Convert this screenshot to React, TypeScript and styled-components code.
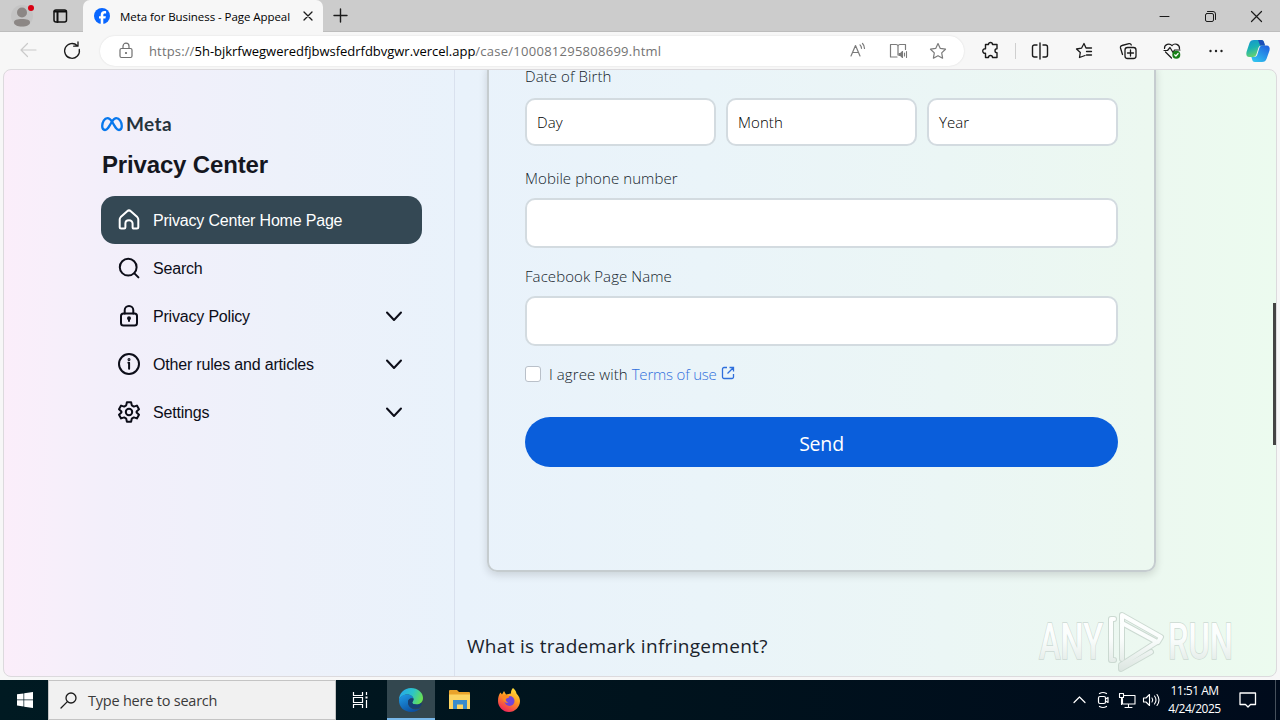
import React from "react";
import styled, { createGlobalStyle } from "styled-components";

const ui = `"Open Sans", "Noto Sans", sans-serif`;
const arial = `"Liberation Sans", Arial, sans-serif`;

const Global = createGlobalStyle`
  * { box-sizing: border-box; }
  body { margin: 0; overflow: hidden; background: #f7f7f7; }
  svg { display: block; flex: none; overflow: visible; }
`;

const Label = styled.span<{ $size: number; $ls?: number; $color?: string; $weight?: number; $family?: string }>`
  font-family: ${(p) => p.$family ?? ui};
  font-size: ${(p) => p.$size}px;
  letter-spacing: ${(p) => p.$ls ?? 0}px;
  color: ${(p) => p.$color ?? "#000"};
  font-weight: ${(p) => p.$weight ?? 400};
  white-space: nowrap;
`;

const Screen = styled.div`
  width: 1280px;
  height: 720px;
  display: flex;
  flex-direction: column;
  overflow: hidden;
`;

/* Browser chrome */
const TabStrip = styled.div`
  height: 32px;
  display: flex;
  background: #ccc;
  box-shadow: inset 0 -1px #bdbdbd;
`;
const StripTools = styled.div`
  width: 83px;
  display: flex;
  align-items: center;
  padding-left: 11px;
  gap: 20px;
`;
const Tab = styled.div`
  width: 240px;
  display: flex;
  align-items: center;
  padding: 0 11px;
  background: #f7f7f7;
  border-radius: 7px 7px 0 0;
`;
const TabTitle = styled.div`
  width: 199px;
  padding-left: 10px;
  display: flex;
`;
const NewTab = styled.div`
  padding: 8px 0 0 10px;
  flex: 1;
`;
const WindowButtons = styled.div`
  display: flex;
  align-items: center;
  gap: 35px;
  padding-right: 18px;
`;
const Toolbar = styled.div`
  height: 37px;
  display: flex;
  align-items: center;
  background: #f7f7f7;
`;
const NavButtons = styled.div`
  width: 100px;
  display: flex;
  padding-left: 19px;
  gap: 25px;
`;
const Address = styled.div`
  width: 864px;
  height: 30px;
  border-radius: 15px;
  background: #fff;
  box-shadow: 0 0 2px rgba(0, 0, 0, 0.12);
  display: flex;
  align-items: center;
  padding: 0 16px 0 17px;
`;
const Url = styled.div`
  flex: 1;
  display: flex;
  padding-left: 14px;
`;
const AddressTools = styled.div`
  display: flex;
  gap: 20px;
`;
const ToolbarIcons = styled.div`
  flex: 1;
  display: flex;
  align-items: center;
  padding-left: 17px;
  gap: 24px;
`;
const Divider = styled.i`
  width: 1px;
  height: 16px;
  margin: 0 -10px;
  background: #cfcfcf;
`;
const Copilot = styled.div`
  margin-left: -4px;
`;

/* Web page */
const Viewport = styled.div`
  height: 608px;
  margin: 0 3px 3px;
  border: 1px solid #dcdadd;
  border-radius: 8px;
  overflow: hidden;
  display: flex;
  position: relative;
  background: linear-gradient(90deg, #fbeefa 0%, #f7effa 4%, #f3effa 8%, #edf1fa 22%, #e9f2fb 36%, #eaf4f9 55%, #ebf6f5 74%, #ecf8f0 90%, #ecfbef 100%);
`;
const ScrollThumb = styled.i`
  position: absolute;
  right: -1px;
  top: 233px;
  width: 4px;
  height: 142px;
  background: #444;
`;
const Sidebar = styled.aside`
  width: 451px;
  padding: 45px 32px 0 97px;
  border-right: 1px solid #d9e1ee;
`;
const Brand = styled.div`
  display: flex;
  align-items: center;
  height: 17px;
  gap: 3px;
`;
const SideTitle = styled.h1`
  margin: 17px 0 15px;
  padding-left: 1px;
  font: 700 24px/32px ${arial};
  letter-spacing: -0.16px;
  color: #15171f;
`;
const NavRow = styled.div<{ $active?: boolean }>`
  width: 321px;
  height: 48px;
  display: flex;
  align-items: center;
  gap: 12px;
  padding: 0 16px;
  border-radius: 14px;
  color: ${(p) => (p.$active ? "#fff" : "#0c0d18")};
  background: ${(p) => (p.$active ? "#344854" : "transparent")};
`;
const NavText = styled.span`
  flex: 1;
  padding-top: 1px;
  font: 400 16px/24px ${arial};
  letter-spacing: -0.19px;
`;
const Main = styled.main`
  width: 702px;
  padding-left: 12px;
`;
const Card = styled.section`
  width: 669px;
  height: 511px;
  margin: -9px 0 0 20px;
  padding: 0 36px;
  border: 2px solid #c5cccf;
  border-radius: 10px;
  box-shadow: 0 3px 9px rgba(0, 0, 0, 0.14);
`;
const FieldLabel = styled.div<{ $top: number }>`
  padding-top: ${(p) => p.$top}px;
  font: 350 15px/22px ${ui};
  letter-spacing: 0.08px;
  color: #131c2b;
`;
const DateRow = styled.div`
  display: flex;
  gap: 10px;
`;
const Box = styled.div<{ $h: number; $top: number }>`
  flex: 1;
  height: ${(p) => p.$h}px;
  margin-top: ${(p) => p.$top}px;
  padding: 0 10px;
  display: flex;
  align-items: center;
  border: 2px solid #d3dbe0;
  border-radius: 10px;
  background: #fff;
`;
const Agree = styled.div`
  height: 24px;
  margin-top: 16px;
  display: flex;
  align-items: center;
`;
const Check = styled.i`
  width: 16px;
  height: 16px;
  margin-right: 8px;
  border: 1px solid #b9c0c9;
  border-radius: 3px;
  background: #fff;
`;
const LinkIcon = styled.div`
  padding: 0 0 3px 4px;
`;
const SendButton = styled.div`
  height: 50px;
  margin-top: 31px;
  padding-top: 3px;
  border-radius: 25px;
  background: #0a5edb;
  display: flex;
  align-items: center;
  justify-content: center;
`;
const Question = styled.h2`
  margin: 59px 0 0;
  font: 500 19px/30px ${ui};
  letter-spacing: 0.3px;
  color: #1a232c;
  white-space: nowrap;
`;
const Watermark = styled.div`
  position: absolute;
  left: 1034px;
  top: 540px;
  width: 200px;
  height: 64px;
`;

/* Taskbar */
const Taskbar = styled.div`
  height: 40px;
  display: flex;
  background: linear-gradient(90deg, #001a22, #00131d 50%, #000b1c);
`;
const TaskButton = styled.div<{ $active?: boolean; $wide?: boolean }>`
  flex: none;
  width: ${(p) => (p.$active ? 48 : p.$wide ? 51 : 49)}px;
  padding-right: ${(p) => (p.$wide ? 3 : 0)}px;
  display: flex;
  align-items: center;
  justify-content: center;
  background: ${(p) => (p.$active ? "#33474f" : "transparent")};
  box-shadow: ${(p) => (p.$active ? "inset 0 -2px #78b8ea" : "none")};
`;
const TaskSearch = styled.div`
  width: 288px;
  margin-left: -1px;
  display: flex;
  align-items: center;
  gap: 11px;
  padding-left: 12px;
  background: #f1f1f1;
  border: 1px solid #c4c4c4;
`;
const Tray = styled.div`
  margin-left: auto;
  display: flex;
  align-items: center;
`;
const TrayIcons = styled.div`
  display: flex;
  align-items: center;
  gap: 8px;
`;
const Clock = styled.div`
  width: 71px;
  display: flex;
  flex-direction: column;
  align-items: center;
  line-height: 18px;
`;
const ShowDesktop = styled.i`
  width: 5px;
  height: 40px;
  margin-left: 11px;
  border-left: 1px solid #46505c;
`;

const Ico = ({ w = 20, h = w, sw = 1.2, c = "#1b1b1b", children }: any) => (
  <svg width={w} height={h} viewBox={`0 0 ${w} ${h}`} fill="none" stroke={c} strokeWidth={sw} strokeLinecap="round" strokeLinejoin="round">
    {children}
  </svg>
);

const Chevron = () => (
  <Ico w={24} sw={2} c="#0c0d18"><path d="M5 8.500l7 7.500 7-7.500" /></Ico>
);

const navItems = [
  { text: "Privacy Center Home Page", active: true, icon: <path d="M4.200 20.500c-1 0-1.500-.6-1.500-1.500v-7.600c0-1 .3-1.600 1-2.300l6.500-5.900c1.100-1 2.500-1 3.600 0l6.500 5.900c.7.700 1 1.300 1 2.300V19c0 .9-.5 1.500-1.500 1.500h-3c-.8 0-1.200-.4-1.200-1.200v-3.700c0-2-1.400-3.300-3.600-3.300s-3.600 1.300-3.600 3.300v3.700c0 .8-.4 1.200-1.200 1.200z" /> },
  { text: "Search", icon: <><circle cx="11.200" cy="11.200" r="8.400" /><path d="M17.400 17.400l4 4" /></> },
  { text: "Privacy Policy", chevron: true, icon: <><rect x="4" y="9.500" width="16" height="12" rx="2.500" /><path d="M7.700 9.500V6.300a4.300 4.300 0 018.600 0v3.200" /><circle cx="12" cy="14.300" r="1" fill="currentColor" /><path d="M12 14.500v2.500" /></> },
  { text: "Other rules and articles", chevron: true, icon: <><circle cx="12" cy="12" r="10" /><path d="M11.400 10.700h.7v6" /><circle cx="12" cy="7.600" r=".5" fill="currentColor" /></> },
  { text: "Settings", chevron: true, icon: <><path d="M9.900 2.300h4.200l.7 3.100 2 1.200 3.100-1 2.100 3.700-2.400 2.100v1.200l2.400 2.100-2.100 3.700-3.100-1-2 1.200-.7 3.100H9.900l-.7-3.100-2-1.200-3.100 1L2 14.700l2.400-2.100v-1.200L2 9.300l2.100-3.700 3.100 1 2-1.200z" /><circle cx="12" cy="12" r="3.200" /></> },
];

export default function App() {
  return (
    <Screen>
      <Global />
      <TabStrip>
        <StripTools>
          <svg width="22" height="22" viewBox="0 0 22 22">
            <circle cx="11" cy="11" r="11" fill="#c4c4c4" />
            <circle cx="11" cy="7.500" r="5" fill="#8c8785" />
            <path d="M3 17.500c0-2.600 3-3.500 8-3.500s8 .9 8 3.500c0 2.500-3.600 4-8 4s-8-1.500-8-4z" fill="#8c8785" />
            <circle cx="20" cy="3" r="3" fill="#d90012" />
          </svg>
          <Ico w={14} sw={1.500} c="#111"><rect x="1" y="1" width="12.500" height="12" rx="2" /><path d="M1.500 2.500h11.500M4.500 3v10" strokeWidth="2" /></Ico>
        </StripTools>
        <Tab>
          <svg width="16" height="16" viewBox="0 0 16 16">
            <circle cx="8" cy="8" r="8" fill="#0866ff" />
            <path d="M6.700 15.900v-5.300H5V8.200h1.700V7.100c0-2.800 1.300-4 4-4 .5 0 1 .1 1.400.2v2.200h-1.200c-1.200 0-1.600.5-1.600 1.600v1.100h2.600l-.5 2.400H9.300v5.300z" fill="#fff" />
          </svg>
          <TabTitle><Label $size={11.5} $ls={-0.06}>Meta for Business - Page Appeal</Label></TabTitle>
          <Ico w={8} sw={1.300}><path d="M0 0l8 8M8 0l-8 8" /></Ico>
        </Tab>
        <NewTab><Ico w={14} sw={1.400}><path d="M7.500 1v13M1 7.500h13" /></Ico></NewTab>
        <WindowButtons>
          <Ico w={10} sw={1}><path d="M0 5.500h9" /></Ico>
          <Ico w={11} sw={1}><rect x=".5" y="2.500" width="8" height="8" rx="1.500" /><path d="M2.500 .5h5.500a2.500 2.500 0 012.500 2.500v5.500" /></Ico>
          <Ico w={11} sw={1.200}><path d="M.5 .5l10 10M10.500 .5l-10 10" /></Ico>
        </WindowButtons>
      </TabStrip>
      <Toolbar>
        <NavButtons>
          <Ico w={18} c="#cacaca"><path d="M2 9h15M8.500 2.500L2 9l6.500 6.500" /></Ico>
          <Ico w={20} sw={1.300}><path d="M15.300 4.700A7.400 7.400 0 1017.300 8.500M16 1v4.200h-4.300" /></Ico>
        </NavButtons>
        <Address>
          <Ico w={18} c="#707070"><rect x="3" y="6.500" width="12" height="9" rx="1.500" /><path d="M6 6.500V4.200a3 3 0 016 0v2.300" /><circle cx="9" cy="11" r=".5" fill="#707070" /></Ico>
          <Url>
            <Label $size={13} $color="#737373" $ls={0.15}>https://</Label>
            <Label $size={13} $ls={-0.02}>5h-bjkrfwegweredfjbwsfedrfdbvgwr.vercel.app</Label>
            <Label $size={13} $color="#737373" $ls={0.26}>/case/100081295808699.html</Label>
          </Url>
          <AddressTools>
            <Ico w={20} c="#7b7b7b"><path d="M3 15L7.500 4.500 12 15M4.500 11.500h6M12 3.800c1 1 1.500 2 1.500 3.500M14.500 2.500c1.500 1.500 2 3 2 5" /></Ico>
            <Ico w={20} c="#7b7b7b"><path d="M9 16H2.500V3.500H8a2 2 0 012 2V14M10 5.500a2 2 0 012-2h5.500v5" /><path d="M11 12.500h1.500l2-2v6l-2-2H11zM16.500 12v3M18.500 10.500v6" strokeWidth="1.100" fill="#7b7b7b" /></Ico>
            <Ico w={20} c="#7b7b7b"><path d="M10 2.500l2.300 4.900 5.200.8-3.800 3.700.9 5.300-4.600-2.500-4.600 2.500.9-5.300-3.800-3.700 5.200-.8z" /></Ico>
          </AddressTools>
        </Address>
        <ToolbarIcons>
          <Ico w={20} sw={1.400}><path d="M4.500 3.500h3a2 2 0 114 0h4.500v4.300a2 2 0 100 4v4.700h-4.500a2 2 0 10-4 0h-3v-4.200a2.300 2.300 0 110-4.500z" /></Ico>
          <Divider />
          <Ico w={20} sw={1.400}><path d="M7 4H4.500a2 2 0 00-2 2v8a2 2 0 002 2H7M13 4h2.500a2 2 0 012 2v8a2 2 0 01-2 2H13M10 2v16" /></Ico>
          <Ico w={20} sw={1.300}><path d="M11 14.500l-5.500 2 .8-5L2.500 8l5-.8L10 2.500l2 4.500h5.500M12.500 10.500h5M12.500 14h5" /></Ico>
          <Ico w={20} sw={1.300}><rect x="7" y="6.500" width="11" height="11" rx="2.500" /><path d="M12.500 9v6M9.500 12h6M4.500 13.500l-2-6.500a2 2 0 011.500-2.500l7-1.800a2 2 0 012.300 1.300" /></Ico>
          <Ico w={20} sw={1.200}><path d="M9.500 17L3.500 11M2.500 7.500A4.200 4.200 0 0110 4.700a4.200 4.200 0 017.500 3M2 9.500h3.500L8 6.500l3 5 1.500-2.500h5.500" /><circle cx="14.300" cy="13.700" r="4" fill="#188018" stroke="none" /><path d="M12.600 13.800l1.300 1.200 2.200-2.500" stroke="#fff" /></Ico>
          <Ico w={20} c="none"><g fill="#222"><circle cx="4.500" cy="10" r="1.200" /><circle cx="10" cy="10" r="1.200" /><circle cx="15.500" cy="10" r="1.200" /></g></Ico>
          <Copilot>
            <svg width="24" height="24" viewBox="0 0 24 24">
              <defs>
                <linearGradient id="ca" x1="0" y1="0" x2=".4" y2="1"><stop stopColor="#1591d2" /><stop offset=".5" stopColor="#19b2b4" /><stop offset="1" stopColor="#6bd36b" /></linearGradient>
                <linearGradient id="cb" x1="1" y1="0" x2=".3" y2="1"><stop stopColor="#1f5be0" /><stop offset="1" stopColor="#2fc0ee" /></linearGradient>
              </defs>
              <path d="M8 1h7c2 0 2.400 1 3 3l.8 2.500h-3c-2 0-3 1-3.600 3l-1.700 5.500c-.6 2-1.500 3-3.500 3H3.500C.8 18-.2 16 .5 13L3.300 4.500C4 2 5.500 1 8 1z" fill="url(#ca)" />
              <path d="M16 23H9c-2 0-2.500-1-3-3l-.6-2H8c2 0 3-1 3.500-3l1.700-5.500c.6-2 1.500-3 3.500-3h3.800c2.700 0 3.700 2 3 5l-2.800 8c-.8 2.500-2.200 3.500-4.700 3.500z" fill="url(#cb)" />
              <path d="M12 1h3.300c2 0 2.400 1 3 3l.8 2.600h-5z" fill="#1c4fb8" />
            </svg>
          </Copilot>
        </ToolbarIcons>
      </Toolbar>

      <Viewport>
        <Sidebar>
          <Brand>
            <svg width="22" height="16" viewBox="0 0 22 16" fill="none" stroke="#0878ed" strokeWidth="2.300">
              <path d="M11 5.500C9.500 3.300 8.200 2.200 6.500 2.200 3.500 2.200 1.200 6 1.200 10c0 2.600 1 4 2.800 4 2.200 0 3.600-2.300 7-8.500 1.500-2.300 2.700-3.300 4.300-3.300 3.100 0 5.500 3.800 5.500 7.800 0 2.600-1 4-2.800 4-2.200 0-3.700-2.500-7-8.500z" />
            </svg>
            <Label $size={19} $weight={700} $family={`Lato, sans-serif`} $color="#26333d" $ls={0.4}>Meta</Label>
          </Brand>
          <SideTitle>Privacy Center</SideTitle>
          {navItems.map((n) => (
            <NavRow key={n.text} $active={n.active}>
              <Ico w={24} sw={2} c="currentColor">{n.icon}</Ico>
              <NavText>{n.text}</NavText>
              {n.chevron && <Chevron />}
            </NavRow>
          ))}
        </Sidebar>
        <Main>
          <Card>
            <FieldLabel $top={2}>Date of Birth</FieldLabel>
            <DateRow>
              {["Day", "Month", "Year"].map((t) => (
                <Box key={t} $h={48} $top={11}><Label $size={15} $weight={350} $ls={0.08}>{t}</Label></Box>
              ))}
            </DateRow>
            <FieldLabel $top={21}>Mobile phone number</FieldLabel>
            <Box $h={50} $top={9} />
            <FieldLabel $top={17}>Facebook Page Name</FieldLabel>
            <Box $h={50} $top={9} />
            <Agree>
              <Check />
              <Label $size={15} $weight={350} $color="#131c2b" $ls={0.08}>I agree with&nbsp;</Label>
              <Label $size={15} $color="#2f6fdc" $weight={350} $ls={-0.2}>Terms of use</Label>
              <LinkIcon>
                <svg width="14" height="14" viewBox="0 0 14 14" fill="none" stroke="#2f6fdc" strokeWidth="1.300">
                  <path d="M6 1.500H3A1.500 1.500 0 001.500 3v8A1.500 1.500 0 003 12.500h8a1.500 1.500 0 001.500-1.500V8M8.500 1.500h4v4M12.500 1.500L6.500 7.500" />
                </svg>
              </LinkIcon>
            </Agree>
            <SendButton><Label $size={19.5} $color="#fff" $ls={-0.2}>Send</Label></SendButton>
          </Card>
          <Question>What is trademark infringement?</Question>
        </Main>
        <Watermark>
          <svg width="200" height="64" viewBox="0 0 200 64" fill="none">
            <defs>
              <linearGradient id="wm" gradientUnits="userSpaceOnUse" x1="0" y1="0" x2="0" y2="64"><stop stopColor="#fff" /><stop offset=".45" stopColor="#fafdfc" /><stop offset="1" stopColor="#d9e3de" /></linearGradient>
            </defs>
            <g fontFamily="Roboto, sans-serif" fontSize="50" fontWeight="500" fill="url(#wm)" stroke="#bccac4" strokeOpacity=".7" strokeWidth="1.600" paintOrder="stroke">
              <text x="1" y="49" textLength="64" lengthAdjust="spacingAndGlyphs">ANY</text>
              <text x="130" y="49" textLength="65" lengthAdjust="spacingAndGlyphs">RUN</text>
            </g>
            <g strokeLinejoin="round" strokeLinecap="round">
              <path d="M76 9h-3v41h3M84 49V5l39 22-3 5M84 13l35 19-36 23v4l30-17" stroke="#b5c4bd" strokeOpacity=".6" strokeWidth="6" />
              <path d="M76 9h-3v41h3M84 49V5l39 22-3 5M84 13l35 19-36 23v4l30-17" stroke="url(#wm)" strokeWidth="4" />
            </g>
          </svg>
        </Watermark>
        <ScrollThumb />
      </Viewport>

      <Taskbar>
        <TaskButton>
          <svg width="16" height="16" viewBox="0 0 16 16" fill="#fff"><path d="M0 2.300l6.500-.9v6.200H0zM7.200 1.300L16 0v7.600H7.200zM0 8.300h6.500v6.200L0 13.600zM7.200 8.300H16V16l-8.800-1.300z" /></svg>
        </TaskButton>
        <TaskSearch>
          <Ico w={16} sw={1.300}><circle cx="10" cy="6" r="5" /><path d="M6.400 9.600L0 16" /></Ico>
          <Label $size={14.5} $color="#3a3a3a" $ls={-0.22}>Type here to search</Label>
        </TaskSearch>
        <TaskButton $wide>
          <svg width="17" height="16" viewBox="0 0 17 16" fill="none" stroke="#fff" strokeWidth="1.200"><path d="M1.500 0v3.500h9V0M1.500 16v-3.500h9V16M1.500 5.500h9v5h-9zM14.500 0v3M14.500 8v8" /><rect x="13.500" y="4.500" width="2" height="2" fill="#fff" stroke="none" /></svg>
        </TaskButton>
        <TaskButton $active>
          <svg width="24" height="24" viewBox="0 0 24 24">
            <defs>
              <linearGradient id="e1" x1="0" y1=".2" x2="1" y2=".5"><stop stopColor="#25a7ed" /><stop offset=".55" stopColor="#2cc4c8" /><stop offset="1" stopColor="#68e052" /></linearGradient>
              <linearGradient id="e2" x1="0" y1="0" x2=".6" y2="1"><stop stopColor="#1f9de8" /><stop offset="1" stopColor="#0c4fa0" /></linearGradient>
            </defs>
            <path d="M0 12C0 5 5.300 0 12 0s12 4.500 12 10c0 4-3 6.500-6.500 6.500-3 0-4.300-1-4.300-2 0-.7 1.300-1.300 1.300-3.300C14.500 9 12 6.500 8.500 6.500 4 6.500 1 9 0 12z" fill="url(#e1)" />
            <path d="M0 12c1-3.500 4-5.500 8.500-5.500 3.200 0 5.700 2 6 4.300-1.200-1-5.500-.8-5.500 3.700 0 4.500 4.500 7.500 9 6.800 1.500-.2 2.800-.8 4-1.500C20 22.500 16.500 24 12.500 24 5 24-.3 19 0 12z" fill="url(#e2)" />
            <path d="M9 14.500c-.2-2.500 1.500-4.500 5.500-3.700.1 1.900-1.300 3-1.300 3.700 0 1 1.500 2 4.300 2 1.800 0 3.300-.5 4.500-1.500.6 0 1 .5.700 1.200-.5 1.300-1.500 2.500-2 3-6 3.500-11.300 0-11.700-4.700z" fill="#163f75" />
          </svg>
        </TaskButton>
        <TaskButton>
          <svg width="22" height="20" viewBox="0 0 22 20">
            <path d="M1 0h7l2 2h10a1 1 0 011 1v15H0V1a1 1 0 011-1z" fill="#e9a32b" />
            <path d="M0 4.500h21V19H0z" fill="#fcd462" />
            <path d="M4 10h14v9h-4v-4.500H8V19H4z" fill="#3a8ccb" />
          </svg>
        </TaskButton>
        <TaskButton>
          <svg width="22" height="24" viewBox="0 0 22 24">
            <defs><linearGradient id="ff" x1=".8" y1="0" x2=".3" y2="1"><stop stopColor="#ffe83f" /><stop offset=".45" stopColor="#ff9a20" /><stop offset="1" stopColor="#f0215c" /></linearGradient></defs>
            <path d="M15 0c2 2 3 3 3.500 5.500C21 8 22 10.500 22 13c0 6-5 11-11 11S0 19 0 13c0-4 1-6.500 2.500-8.500L4 6.500 6 3l2 3.500 5-1c-.3-2 .5-4 2-5.500z" fill="url(#ff)" />
            <circle cx="11.500" cy="13" r="5" fill="#7145d8" />
            <path d="M4 8c2-1 4.500-1.500 7 0 1 1-.5 2-2.500 2.500C7 11.500 8 14 10.500 14.500c-3 1.500-6.500-2.500-6.500-6.500z" fill="#ff8a1e" />
          </svg>
        </TaskButton>
        <Tray>
          <TrayIcons>
            <Ico w={16} c="#fff"><path d="M3 10.500L8.500 5l5.500 5.500" /></Ico>
            <Ico w={16} c="#fff" sw={1.200}><rect x="3.500" y="4.500" width="7" height="7" rx="1.500" /><path d="M10.500 7l2.500-1.500v5L10.500 9M4.500 1.500q3.500-2 7 0M4.500 14.500q3.500 2 7 0" /></Ico>
            <Ico w={16} c="#fff" sw={1.100}><path d="M5 3.500h11v8.500H3.500V6.500M9.500 12v3M6 15.500h7M.5 1.500h4v4h-4zM2.500 5.500v7" /></Ico>
            <Ico w={16} c="#fff" sw={1.100}><path d="M.5 6H3l3.500-3.500v11L3 10H.5zM9 6q1.500 2 0 4M11.500 4q3 4 0 8M14 2.500q4 5.500 0 11" /></Ico>
          </TrayIcons>
          <Clock>
            <Label $size={12} $color="#fff" $ls={-0.5}>11:51 AM</Label>
            <Label $size={12} $color="#fff" $ls={-0.5}>4/24/2025</Label>
          </Clock>
          <Ico w={34} h={18} c="#fff" sw={1.300}><path d="M10 2h15.500v11.500h-5l-2.500 2.500-2.500-2.500H10z" /></Ico>
          <ShowDesktop />
        </Tray>
      </Taskbar>
    </Screen>
  );
}
